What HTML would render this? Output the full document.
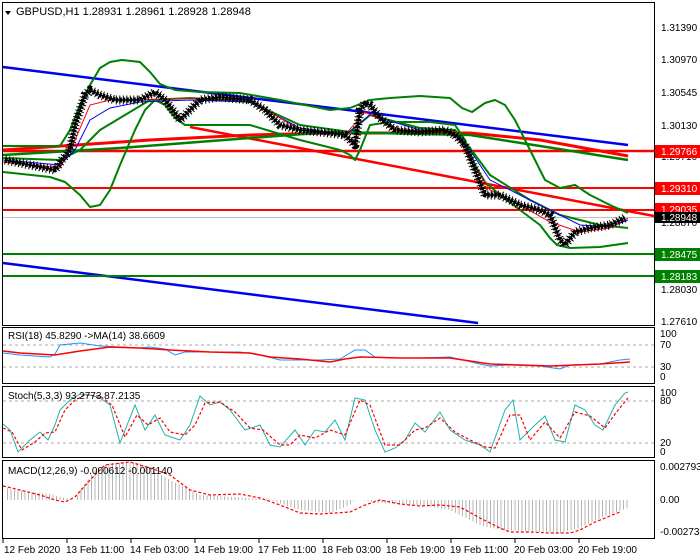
<!DOCTYPE html>
<html><head><meta charset="utf-8"><style>
html,body{margin:0;padding:0;background:#fff;}
svg{display:block;font-family:"Liberation Sans",sans-serif;font-size:10px;}
</style></head><body>
<svg width="700" height="560" viewBox="0 0 700 560" xmlns="http://www.w3.org/2000/svg">
<defs>
<pattern id="vl" x="0" y="0" width="3.5" height="10" patternUnits="userSpaceOnUse">
<rect x="0" y="0" width="1" height="10" fill="#b4b4b4"/>
</pattern>
</defs>
<rect width="700" height="560" fill="#fff"/>
<g fill="none" stroke="#000" stroke-width="1">
<rect x="2.5" y="2.5" width="652" height="323"/>
<rect x="2.5" y="327.5" width="652" height="56"/>
<rect x="2.5" y="386.5" width="652" height="71"/>
<rect x="2.5" y="460.5" width="652" height="78"/>
</g>
<line x1="3" y1="217.5" x2="654" y2="217.5" stroke="#c0c0c0"/>
<polyline fill="none" stroke="#0000ee" stroke-width="2.5" points="3,67 628,145"/>
<polyline fill="none" stroke="#0000ee" stroke-width="2.5" points="3,263 478,323"/>
<line x1="3" y1="151" x2="654" y2="151" stroke="#f00" stroke-width="2.5"/>
<line x1="3" y1="188" x2="654" y2="188" stroke="#f00" stroke-width="2"/>
<line x1="3" y1="210" x2="654" y2="210" stroke="#f00" stroke-width="2"/>
<line x1="3" y1="254" x2="654" y2="254" stroke="#008000" stroke-width="2"/>
<line x1="3" y1="276" x2="654" y2="276" stroke="#008000" stroke-width="2"/>
<polyline fill="none" stroke="#f00" stroke-width="2.5" points="190,127 654,216"/>
<polyline fill="none" stroke="#f00" stroke-width="3" points="3,150 150,140 250,135 330,133 470,133 540,140 628,156"/>
<polyline fill="none" stroke="#008000" stroke-width="2.5" points="3,155 120,148 250,138 330,132 470,135 540,146 628,160"/>
<g fill="none" stroke="#008000" stroke-width="2" stroke-linejoin="round">
<polyline points="3,146 60,146 70,130 80,105 90,85 100,68 110,62 122,60 140,62 150,72 160,84 175,90 200,92 240,93 280,100 330,110 350,108 370,100 390,98 420,96 450,98 462,108 472,112 485,103 495,100 505,105 515,120 530,150 545,180 560,188 575,185 590,195 610,205 628,213"/>
<polyline points="3,172 50,177 65,182 80,195 90,207 100,205 110,190 120,165 135,130 145,110 155,100 165,105 175,118 185,125 200,125 250,125 300,140 340,150 350,155 355,160 360,150 370,125 390,122 430,122 455,125 465,140 475,165 485,182 500,195 520,210 540,225 550,238 557,245 570,248 600,247 628,243"/>
<polyline points="3,158 60,160 80,150 100,130 150,100 190,98 250,102 300,125 350,132 370,115 420,128 455,130 470,148 490,175 530,200 560,215 600,225 628,228"/>
</g>
<polyline fill="none" stroke="#00f" stroke-width="1" points="3,160 60,165 75,150 90,120 110,108 140,102 190,100 250,102 300,128 345,135 370,115 420,130 455,132 470,150 490,180 520,195 550,210 580,225 610,227 628,220"/>
<polyline fill="none" stroke="#f00" stroke-width="1" points="3,162 60,168 75,140 90,105 110,100 140,100 190,98 250,100 300,130 345,135 365,112 400,130 455,132 470,160 490,190 520,205 550,222 580,232 610,228 628,218"/>
<!-- candles approximation -->
<polyline fill="none" stroke="#000" stroke-width="1.5" stroke-linejoin="round" points="5,160 30,165 55,170 62,160 70,150 75,125 80,110 85,95 90,90 100,95 115,100 140,100 155,92 165,100 180,120 190,110 200,100 220,97 250,100 265,110 280,125 300,130 320,132 345,135 355,145 360,110 365,103 370,105 380,118 395,130 420,132 445,130 455,135 465,145 475,170 485,195 500,195 520,205 540,210 550,215 560,240 565,245 575,232 590,228 610,225 625,218"/>
<polyline fill="none" stroke="#000" stroke-width="9" stroke-dasharray="1,2.5" stroke-linejoin="round" points="5,160 30,165 55,170 62,160 70,150 75,125 80,110 85,95 90,90 100,95 115,100 140,100 155,92 165,100 180,120 190,110 200,100 220,97 250,100 265,110 280,125 300,130 320,132 345,135 355,145 360,110 365,103 370,105 380,118 395,130 420,132 445,130 455,135 465,145 475,170 485,195 500,195 520,205 540,210 550,215 560,240 565,245 575,232 590,228 610,225 625,218"/>
<polyline fill="none" stroke="#000" stroke-width="5" stroke-dasharray="2.5,1" stroke-linejoin="round" points="5,160 30,165 55,170 62,160 70,150 75,125 80,110 85,95 90,90 100,95 115,100 140,100 155,92 165,100 180,120 190,110 200,100 220,97 250,100 265,110 280,125 300,130 320,132 345,135 355,145 360,110 365,103 370,105 380,118 395,130 420,132 445,130 455,135 465,145 475,170 485,195 500,195 520,205 540,210 550,215 560,240 565,245 575,232 590,228 610,225 625,218"/>
<polygon points="5,11 11,11 8,15" fill="#000"/>
<text x="16" y="15" font-size="11">GBPUSD,H1  1.28931 1.28961 1.28928 1.28948</text>
<g font-size="10" fill="#000">
<text x="661" y="31">1.31390</text>
<text x="661" y="63">1.30970</text>
<text x="661" y="96">1.30545</text>
<text x="661" y="129">1.30130</text>
<text x="661" y="160">1.29710</text>
<text x="661" y="226">1.28870</text>
<text x="661" y="293">1.28030</text>
<text x="661" y="325">1.27610</text>
</g>
<g font-size="10" fill="#fff">
<rect x="655" y="145" width="45" height="13" fill="#f00"/><text x="661" y="155">1.29766</text>
<rect x="655" y="182" width="45" height="13" fill="#f00"/><text x="661" y="192">1.29310</text>
<rect x="655" y="203" width="45" height="13" fill="#f00"/><text x="661" y="213">1.29035</text>
<rect x="655" y="212" width="45" height="11" fill="#000"/><text x="661" y="221">1.28948</text>
<rect x="655" y="248" width="45" height="13" fill="#008000"/><text x="661" y="258">1.28475</text>
<rect x="655" y="270" width="45" height="13" fill="#008000"/><text x="661" y="280">1.28183</text>
</g>
<!-- RSI -->
<g stroke="#aaa" stroke-dasharray="3,3"><line x1="3" y1="345" x2="654" y2="345"/><line x1="3" y1="367" x2="654" y2="367"/></g>
<polyline fill="none" stroke="#1e90ff" stroke-width="1" points="3,353 20,355 50,357 55,354 60,345 70,344 80,343 100,346 120,347 140,348 150,347 165,349 175,355 185,352 195,352 210,352 240,352 260,355 280,360 300,360 320,360 340,359 355,350 365,350 375,357 390,358 420,358 450,357 480,364 490,366 510,365 540,366 560,369 570,365 600,364 620,360 630,359"/>
<polyline fill="none" stroke="#f00" stroke-width="1.5" points="3,351 20,353 55,355 80,351 110,347 140,348 170,350 210,352 250,353 270,357 300,359 330,362 345,359 360,357 400,358 450,358 490,364 520,365 550,366 575,365 600,364 630,362"/>
<text x="8" y="339">RSI(18) 45.8290  -&gt;MA(14) 38.6609</text>
<g font-size="10"><text x="660" y="337">100</text><text x="660" y="348">70</text><text x="660" y="370">30</text><text x="660" y="380">0</text></g>
<!-- Stoch -->
<g stroke="#aaa" stroke-dasharray="3,3"><line x1="3" y1="401" x2="654" y2="401"/><line x1="3" y1="443" x2="654" y2="443"/></g>
<polyline fill="none" stroke="#20b2aa" stroke-width="1" points="3,424 10,430 18,452 30,440 40,432 48,440 55,425 60,410 70,400 80,394 90,395 100,398 110,405 120,443 135,405 145,430 155,415 165,435 180,440 190,425 200,396 210,405 220,402 230,410 245,430 260,425 270,445 280,447 295,430 305,445 315,430 325,432 335,420 345,440 355,398 365,400 375,430 385,452 395,448 405,440 415,423 425,432 440,412 450,430 465,440 480,445 490,452 505,410 513,400 520,440 535,425 545,416 555,440 565,442 575,405 585,410 595,425 603,430 615,405 625,393 628,392"/>
<polyline fill="none" stroke="#f00" stroke-width="1.2" stroke-dasharray="3,2" points="3,428 12,432 22,450 35,442 45,433 55,432 65,410 75,400 85,395 100,396 112,405 125,437 137,415 148,425 160,418 170,432 185,435 195,425 205,403 220,402 235,412 250,428 263,430 280,445 290,445 300,435 315,438 330,430 345,435 360,400 370,405 385,445 400,445 415,430 425,428 440,418 455,432 470,440 485,447 495,448 510,415 520,415 530,440 545,422 560,438 575,412 590,416 605,428 615,414 628,398"/>
<text x="8" y="399">Stoch(5,3,3) 93.2773 87.2135</text>
<g font-size="10"><text x="660" y="396">100</text><text x="660" y="404">80</text><text x="660" y="446">20</text><text x="660" y="455">0</text></g>
<!-- MACD -->
<polygon fill="url(#vl)" points="5,500 5,488 30,492 50,494 65,498 75,500 80,490 95,470 110,463 140,463 170,480 200,495 250,498 270,499 270,500 5,500"/>
<polygon fill="url(#vl)" points="270,500 300,510 330,513 350,505 355,500 360,500 380,503 420,505 450,510 480,525 500,530 540,532 560,533 580,528 600,518 628,508 628,500"/>
<polyline fill="none" stroke="#f00" stroke-width="1.2" stroke-dasharray="3,2" points="3,486 20,490 40,495 55,500 65,502 75,497 90,480 105,465 130,462 150,468 170,475 190,490 210,495 240,494 260,498 280,505 300,513 320,514 350,512 365,505 380,500 400,504 420,506 440,505 460,507 480,518 500,528 510,532 530,532 550,533 570,533 580,530 595,522 610,516 620,512"/>
<text x="8" y="474">MACD(12,26,9) -0.000612 -0.001140</text>
<g font-size="10"><text x="660" y="470">0.002793</text><text x="660" y="503">0.00</text><text x="660" y="535">-0.002734</text></g>
<g font-size="10">
<text x="4" y="553">12 Feb 2020</text><text x="66" y="553">13 Feb 11:00</text><text x="130" y="553">14 Feb 03:00</text><text x="194" y="553">14 Feb 19:00</text><text x="258" y="553">17 Feb 11:00</text><text x="322" y="553">18 Feb 03:00</text><text x="386" y="553">18 Feb 19:00</text><text x="450" y="553">19 Feb 11:00</text><text x="514" y="553">20 Feb 03:00</text><text x="578" y="553">20 Feb 19:00</text>
</g>
<g stroke="#000"><line x1="3" y1="539" x2="3" y2="543"/><line x1="67" y1="539" x2="67" y2="543"/><line x1="131" y1="539" x2="131" y2="543"/><line x1="195" y1="539" x2="195" y2="543"/><line x1="259" y1="539" x2="259" y2="543"/><line x1="323" y1="539" x2="323" y2="543"/><line x1="387" y1="539" x2="387" y2="543"/><line x1="451" y1="539" x2="451" y2="543"/><line x1="515" y1="539" x2="515" y2="543"/><line x1="579" y1="539" x2="579" y2="543"/></g>
</svg>
</body></html>
